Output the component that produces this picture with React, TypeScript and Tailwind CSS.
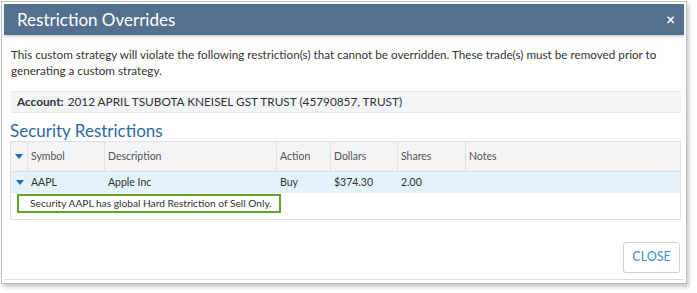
const columns = [
  { label: "Symbol", w: "w-[77px]" },
  { label: "Description", w: "w-[172px]" },
  { label: "Action", w: "w-[54px]" },
  { label: "Dollars", w: "w-[67px]" },
  { label: "Shares", w: "w-[68px]" },
];

function Caret() {
  return (
    <svg width="8" height="5" viewBox="0 0 8 5" aria-hidden="true">
      <path d="M0 0h8L4 5z" fill="#1f6fb2" />
    </svg>
  );
}

export default function App() {
  const row = ["AAPL", "Apple Inc", "Buy", "$374.30", "2.00"];

  return (
    <div className="h-[293px] w-[697px] bg-white pl-[1px] pt-[1px] font-['Lato',sans-serif]">
      <div className="h-[283px] w-[686px] border border-[#bdbdbd] bg-white p-[2px] shadow-[2px_3px_4px_rgba(0,0,0,0.22)]">
        <div className="flex h-[276px] w-[680px] flex-col border-b border-[#dcdcdc]">
          <div className="flex h-[31px] shrink-0 items-center justify-between bg-[#53708e] pl-[13px] pr-[9px] shadow-[0_2px_2px_rgba(0,0,0,0.18)]">
            <span className="text-[17px] leading-none text-white">Restriction Overrides</span>
            <span className="text-[15px] font-bold leading-none text-white">×</span>
          </div>

          <div className="flex flex-1 flex-col pl-[6px] pr-[3px] pt-[11px]">
            <p className="pl-[1px] text-[11.7px] leading-[16px] text-[#333]">
              This custom strategy will violate the following restriction(s) that cannot be overridden. These trade(s) must be removed prior to generating a custom strategy.
            </p>

            <div className="ml-[1px] mt-[13px] flex h-[22px] items-center border-y border-[#e6e8eb] bg-[#f2f4f6] pl-[6px] text-[11.8px] text-[#333]">
              <span className="mr-[4px] font-bold">Account:</span>
              <span>2012 APRIL TSUBOTA KNEISEL GST TRUST (45790857, TRUST)</span>
            </div>

            <h2 className="mt-[8px] text-[17px] leading-[19px] text-[#2c6aa3]">Security Restrictions</h2>

            <div className="mt-[1px] border border-[#dfe1e4] text-[10.5px] text-[#555]">
              <div className="flex h-[30px] border-b border-[#dfe1e4] bg-[#f2f4f6]">
                <div className="flex w-[17px] items-center justify-center border-r border-[#dfe1e4]">
                  <Caret />
                </div>
                {columns.map((c) => (
                  <div key={c.label} className={`${c.w} flex items-center border-r border-[#dfe1e4] pl-[3px]`}>
                    {c.label}
                  </div>
                ))}
                <div className="flex flex-1 items-center pl-[3px]">Notes</div>
              </div>

              <div className="flex h-[21px] items-center bg-[#e4f2fa] text-[#333]">
                <div className="flex w-[17px] items-center justify-center">
                  <Caret />
                </div>
                {columns.map((c, i) => (
                  <div key={c.label} className={`${c.w} pl-[3px]`}>
                    {row[i]}
                  </div>
                ))}
              </div>

              <div className="h-[26px] pl-[6px] pt-[1px]">
                <div className="flex h-[19px] w-[264px] items-center border-[2.5px] border-[#5fa52c] pl-[11px] text-[10.2px] text-[#333]">
                  Security AAPL has global Hard Restriction of Sell Only.
                </div>
              </div>
            </div>

            <div className="mt-auto mb-[6px] flex justify-end pr-[1px]">
              <button className="h-[31px] w-[57px] rounded-[3px] border border-[#cfd2d6] bg-white text-[12.5px] text-[#3a8fd3]">
                CLOSE
              </button>
            </div>
          </div>
        </div>
      </div>
    </div>
  );
}
